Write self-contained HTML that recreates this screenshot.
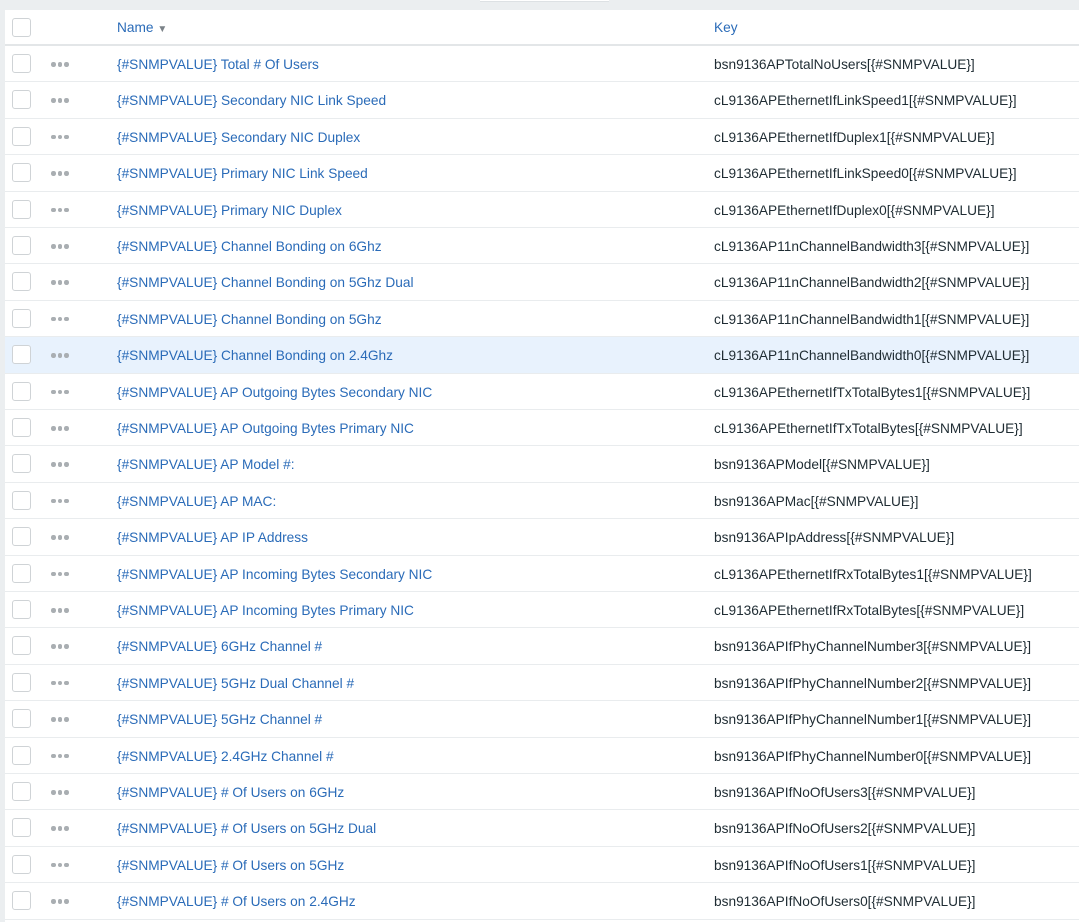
<!DOCTYPE html>
<html><head><meta charset="utf-8"><style>
body{margin:0;width:1079px;height:922px;background:#ebeef0;overflow:hidden;font-family:"Liberation Sans",Arial,sans-serif;font-size:13.7px;position:relative}
.top{position:absolute;left:480px;top:0;width:129px;height:1px;background:#fff;border-bottom:1px solid #dde1e4}
.panel{position:absolute;left:5px;top:10px;right:0;bottom:0;background:#fff;border-top:1px solid #dfe3e6}
.hdr{position:absolute;left:5px;top:10px;right:0;height:34px;border-bottom:2px solid #e3e6e8;background:#fff}
.row{position:absolute;left:5px;right:0;height:35.4px;border-bottom:1px solid #e9ecee;background:#fff}
.row.hl{background:#e8f2fd}
.cb{position:absolute;left:7px;top:8px;width:17px;height:17px;border:1px solid #cfd3d6;border-radius:3px;background:#fff}
.dots{position:absolute;left:46px;top:16px;width:19px;height:5px}
.dots i{position:absolute;top:0;width:4.5px;height:4.5px;border-radius:50%;background:#a9aeb2}
.n{position:absolute;left:112px;top:11px;color:#2a6bb8;white-space:nowrap}
.k{position:absolute;left:709px;top:11px;color:#1f2c33;white-space:nowrap}
</style></head><body>
<div class="top"></div>
<div class="panel"></div>
<div class="hdr"><div class="cb" style="top:8px"></div><div class="n" style="top:10px">Name <span style="font-size:10px;color:#7b8288">&#9660;</span></div><div class="k" style="top:10px;color:#2a6bb8">Key</div></div>
<div id="rows"></div>
<script>
var d=[["Total # Of Users","bsn9136APTotalNoUsers"],["Secondary NIC Link Speed","cL9136APEthernetIfLinkSpeed1"],["Secondary NIC Duplex","cL9136APEthernetIfDuplex1"],["Primary NIC Link Speed","cL9136APEthernetIfLinkSpeed0"],["Primary NIC Duplex","cL9136APEthernetIfDuplex0"],["Channel Bonding on 6Ghz","cL9136AP11nChannelBandwidth3"],["Channel Bonding on 5Ghz Dual","cL9136AP11nChannelBandwidth2"],["Channel Bonding on 5Ghz","cL9136AP11nChannelBandwidth1"],["Channel Bonding on 2.4Ghz","cL9136AP11nChannelBandwidth0"],["AP Outgoing Bytes Secondary NIC","cL9136APEthernetIfTxTotalBytes1"],["AP Outgoing Bytes Primary NIC","cL9136APEthernetIfTxTotalBytes"],["AP Model #:","bsn9136APModel"],["AP MAC:","bsn9136APMac"],["AP IP Address","bsn9136APIpAddress"],["AP Incoming Bytes Secondary NIC","cL9136APEthernetIfRxTotalBytes1"],["AP Incoming Bytes Primary NIC","cL9136APEthernetIfRxTotalBytes"],["6GHz Channel #","bsn9136APIfPhyChannelNumber3"],["5GHz Dual Channel #","bsn9136APIfPhyChannelNumber2"],["5GHz Channel #","bsn9136APIfPhyChannelNumber1"],["2.4GHz Channel #","bsn9136APIfPhyChannelNumber0"],["# Of Users on 6GHz","bsn9136APIfNoOfUsers3"],["# Of Users on 5GHz Dual","bsn9136APIfNoOfUsers2"],["# Of Users on 5GHz","bsn9136APIfNoOfUsers1"],["# Of Users on 2.4GHz","bsn9136APIfNoOfUsers0"]];
var h="";for(var i=0;i<d.length;i++){var t=(46+i*36.4).toFixed(1);h+='<div class="row'+(i==8?' hl':'')+'" style="top:'+t+'px"><div class="cb"></div><div class="dots"><i style="left:0"></i><i style="left:6.5px"></i><i style="left:13px"></i></div><div class="n">{#SNMPVALUE} '+d[i][0]+'</div><div class="k">'+d[i][1]+'[{#SNMPVALUE}]</div></div>';}
document.getElementById("rows").innerHTML=h;
</script>
</body></html>
